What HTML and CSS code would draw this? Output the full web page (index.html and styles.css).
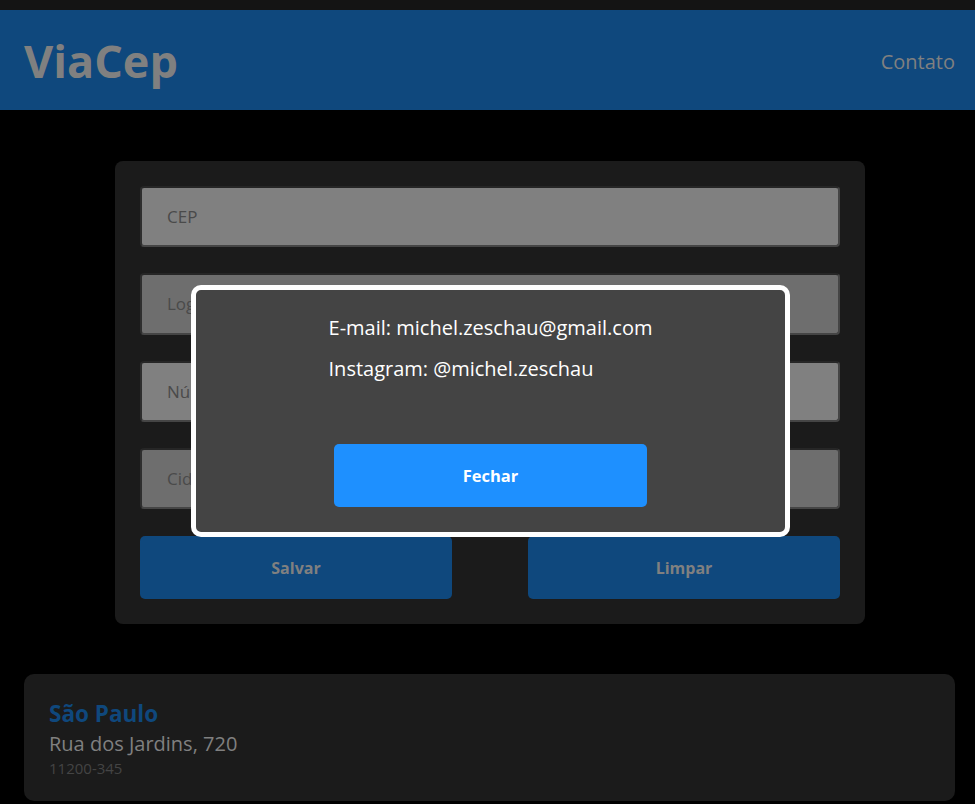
FILE: index.html
```html
<!DOCTYPE html>
<html lang="pt-BR">
<head>
<meta charset="utf-8">
<title>ViaCep</title>
<link rel="stylesheet" href="styles.css">
</head>
<body>
<div class="topbar"></div>
<header class="header">
  <h1 class="logo">ViaCep</h1>
  <a class="nav-link" href="#">Contato</a>
</header>
<main class="main">
  <form class="form-card">
    <input class="field field-light" type="text" placeholder="CEP">
    <input class="field field-dark" type="text" placeholder="Logradouro">
    <input class="field field-light" type="text" placeholder="Número">
    <input class="field field-dark" type="text" placeholder="Cidade">
    <div class="actions">
      <button class="btn" type="button">Salvar</button>
      <button class="btn" type="button">Limpar</button>
    </div>
  </form>
  <section class="result-card">
    <h2 class="result-city">São Paulo</h2>
    <p class="result-street">Rua dos Jardins, 720</p>
    <p class="result-cep">11200-345</p>
  </section>
</main>
<div class="modal">
  <div class="modal-text">
    <p class="modal-line">E-mail: michel.zeschau@gmail.com</p>
    <p class="modal-line">Instagram: @michel.zeschau</p>
  </div>
  <button class="modal-btn" type="button">Fechar</button>
</div>
</body>
</html>
```
FILE: styles.css
```css
* { box-sizing: border-box; }
html, body {
  margin: 0;
  padding: 0;
  background: #000;
  font-family: "Open Sans", "Liberation Sans", sans-serif;
  height: 804px;
  overflow: hidden;
}
.topbar {
  height: 10px;
  background: #141414;
}
.header {
  height: 100px;
  background: #0f487d;
  display: flex;
  align-items: center;
  justify-content: space-between;
  padding: 0 20px 0 24px;
}
.logo {
  margin: 0;
  font-size: 45px;
  font-weight: 700;
  color: #808080;
  line-height: 1;
}
.nav-link {
  color: #808080;
  font-size: 20px;
  text-decoration: none;
  margin-top: 2px;
}
.main {
  padding: 51px 20px 0 24px;
  display: flex;
  flex-direction: column;
  align-items: center;
}
.form-card {
  width: 750px;
  background: #1b1b1b;
  border-radius: 8px;
  padding: 25px 25px 25px;
  display: flex;
  flex-direction: column;
  gap: 26px;
  margin-left: 1px;
}
.field {
  height: 61.25px;
  width: 100%;
  border: 2px solid #454545;
  border-top-color: #262626;
  border-left-color: #2e2e2e;
  border-radius: 4px;
  padding: 0 25px;
  font-family: inherit;
  font-size: 17px;
  outline: none;
}
.field-light { background: #808080; }
.field-dark { background: #6e6e6e; }
.field::placeholder { color: #4a4a4a; }
.actions {
  display: flex;
  justify-content: space-between;
  margin-top: 1px;
}
.btn {
  width: 312px;
  height: 63px;
  border: none;
  border-radius: 5px;
  background: #0f487d;
  color: #808080;
  font-family: inherit;
  font-weight: 700;
  font-size: 16px;
}
.result-card {
  align-self: stretch;
  margin-top: 50px;
  background: #1b1b1b;
  border-radius: 10px;
  padding: 25px 25px 24px;
  height: 127px;
}
.result-city {
  margin: 0;
  color: #0f487d;
  font-size: 22.5px;
  font-weight: 700;
  line-height: 30px;
}
.result-street {
  margin: 0;
  color: #808080;
  font-size: 20px;
  line-height: 29px;
}
.result-cep {
  margin: 0;
  color: #444;
  font-size: 15px;
  line-height: 20px;
}
.modal {
  position: absolute;
  left: 191px;
  top: 285px;
  width: 599px;
  height: 252px;
  background: #444;
  border: 5px solid #fff;
  border-radius: 10px;
  display: flex;
  flex-direction: column;
  align-items: center;
  padding-top: 24px;
}
.modal-text { text-align: left; }
.modal-line {
  margin: 0 0 13px;
  color: #fff;
  font-size: 20px;
  line-height: 28px;
}
.modal-btn {
  margin-top: 48px;
  width: 313px;
  height: 63px;
  border: none;
  border-radius: 5px;
  background: #1e90ff;
  color: #fff;
  font-family: inherit;
  font-weight: 700;
  font-size: 16.5px;
}
```
